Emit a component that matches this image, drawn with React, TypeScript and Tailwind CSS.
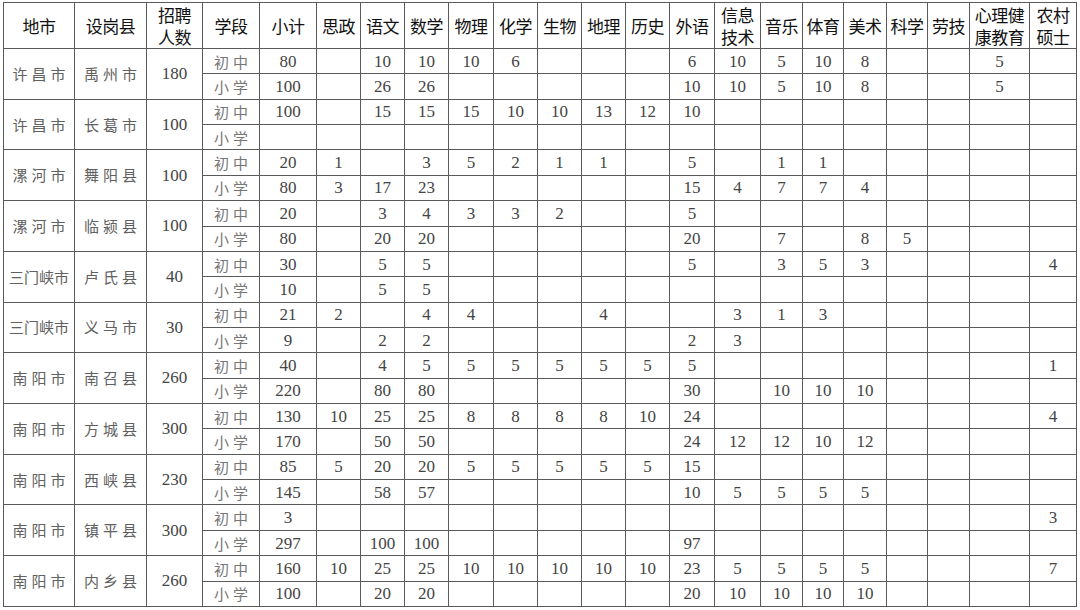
import { Fragment } from "react";

const SUBJECTS = [
  "小计", "思政", "语文", "数学", "物理", "化学", "生物", "地理", "历史", "外语",
  "信息\n技术", "音乐", "体育", "美术", "科学", "劳技", "心理健\n康教育", "农村\n硕士",
];

// column widths in px: 地市, 设岗县, 招聘人数, 学段, then the 18 subject columns
const WIDTHS = [71, 72, 56, 57, 57, 44, 44, 44, 45, 44, 44, 44, 44, 45, 46, 42, 41, 43, 41, 42, 60, 47];

type Group = {
  city: string;
  county: string;
  total: string;
  junior: string[];
  primary: string[];
};

const e = "";

const GROUPS: Group[] = [
  {
    city: "许昌市", county: "禹州市", total: "180",
    junior: ["80", e, "10", "10", "10", "6", e, e, e, "6", "10", "5", "10", "8", e, e, "5", e],
    primary: ["100", e, "26", "26", e, e, e, e, e, "10", "10", "5", "10", "8", e, e, "5", e],
  },
  {
    city: "许昌市", county: "长葛市", total: "100",
    junior: ["100", e, "15", "15", "15", "10", "10", "13", "12", "10", e, e, e, e, e, e, e, e],
    primary: [e, e, e, e, e, e, e, e, e, e, e, e, e, e, e, e, e, e],
  },
  {
    city: "漯河市", county: "舞阳县", total: "100",
    junior: ["20", "1", e, "3", "5", "2", "1", "1", e, "5", e, "1", "1", e, e, e, e, e],
    primary: ["80", "3", "17", "23", e, e, e, e, e, "15", "4", "7", "7", "4", e, e, e, e],
  },
  {
    city: "漯河市", county: "临颍县", total: "100",
    junior: ["20", e, "3", "4", "3", "3", "2", e, e, "5", e, e, e, e, e, e, e, e],
    primary: ["80", e, "20", "20", e, e, e, e, e, "20", e, "7", e, "8", "5", e, e, e],
  },
  {
    city: "三门峡市", county: "卢氏县", total: "40",
    junior: ["30", e, "5", "5", e, e, e, e, e, "5", e, "3", "5", "3", e, e, e, "4"],
    primary: ["10", e, "5", "5", e, e, e, e, e, e, e, e, e, e, e, e, e, e],
  },
  {
    city: "三门峡市", county: "义马市", total: "30",
    junior: ["21", "2", e, "4", "4", e, e, "4", e, e, "3", "1", "3", e, e, e, e, e],
    primary: ["9", e, "2", "2", e, e, e, e, e, "2", "3", e, e, e, e, e, e, e],
  },
  {
    city: "南阳市", county: "南召县", total: "260",
    junior: ["40", e, "4", "5", "5", "5", "5", "5", "5", "5", e, e, e, e, e, e, e, "1"],
    primary: ["220", e, "80", "80", e, e, e, e, e, "30", e, "10", "10", "10", e, e, e, e],
  },
  {
    city: "南阳市", county: "方城县", total: "300",
    junior: ["130", "10", "25", "25", "8", "8", "8", "8", "10", "24", e, e, e, e, e, e, e, "4"],
    primary: ["170", e, "50", "50", e, e, e, e, e, "24", "12", "12", "10", "12", e, e, e, e],
  },
  {
    city: "南阳市", county: "西峡县", total: "230",
    junior: ["85", "5", "20", "20", "5", "5", "5", "5", "5", "15", e, e, e, e, e, e, e, e],
    primary: ["145", e, "58", "57", e, e, e, e, e, "10", "5", "5", "5", "5", e, e, e, e],
  },
  {
    city: "南阳市", county: "镇平县", total: "300",
    junior: ["3", e, e, e, e, e, e, e, e, e, e, e, e, e, e, e, e, "3"],
    primary: ["297", e, "100", "100", e, e, e, e, e, "97", e, e, e, e, e, e, e, e],
  },
  {
    city: "南阳市", county: "内乡县", total: "260",
    junior: ["160", "10", "25", "25", "10", "10", "10", "10", "10", "23", "5", "5", "5", "5", e, e, e, "7"],
    primary: ["100", e, "20", "20", e, e, e, e, e, "20", "10", "10", "10", "10", e, e, e, e],
  },
];

const cell = "border border-[#5a5a5a] p-0 text-center align-middle";
const cjk = "font-['Noto_Sans_CJK_SC',sans-serif]";
const num = "font-['Liberation_Serif','Noto_Sans_CJK_SC',serif] text-[17px] text-[#444]";

function Place({ name }: { name: string }) {
  const spaced = name.length <= 3;
  return (
    <span
      className={`${cjk} text-[15px] text-[#606060] ${spaced ? "tracking-[4px] pl-[4px]" : "tracking-[0px]"}`}
    >
      {name}
    </span>
  );
}

function DataRow({ stage, values, lead }: { stage: string; values: string[]; lead?: Group }) {
  return (
    <tr className="h-[25.36px]">
      {lead && (
        <>
          <td rowSpan={2} className={cell}><Place name={lead.city} /></td>
          <td rowSpan={2} className={cell}><Place name={lead.county} /></td>
          <td rowSpan={2} className={`${cell} ${num}`}>{lead.total}</td>
        </>
      )}
      <td className={`${cell} ${cjk} text-[15px] text-[#767676] tracking-[4px] pl-[4px] leading-none`}>{stage}</td>
      {values.map((v, i) => (
        <td key={i} className={`${cell} ${num} leading-none`}>{v}</td>
      ))}
    </tr>
  );
}

export default function App() {
  return (
    <div className="w-[1080px] h-[610px] bg-white pt-[2px] pl-[3px] overflow-hidden">
      <table className="table-fixed border-collapse w-[1073px]">
        <colgroup>
          {WIDTHS.map((w, i) => (
            <col key={i} style={{ width: w }} />
          ))}
        </colgroup>
        <thead>
          <tr className="h-[46px]">
            {["地市", "设岗县", "招聘\n人数", "学段", ...SUBJECTS].map((h, i) => (
              <th
                key={i}
                className={`${cell} ${cjk} font-normal text-[17px] leading-[22px] text-[#111] whitespace-pre-line tracking-[-0.5px]`}
              >
                {h}
              </th>
            ))}
          </tr>
        </thead>
        <tbody>
          {GROUPS.map((g) => (
            <Fragment key={g.county}>
              <DataRow stage="初中" values={g.junior} lead={g} />
              <DataRow stage="小学" values={g.primary} />
            </Fragment>
          ))}
        </tbody>
      </table>
    </div>
  );
}
